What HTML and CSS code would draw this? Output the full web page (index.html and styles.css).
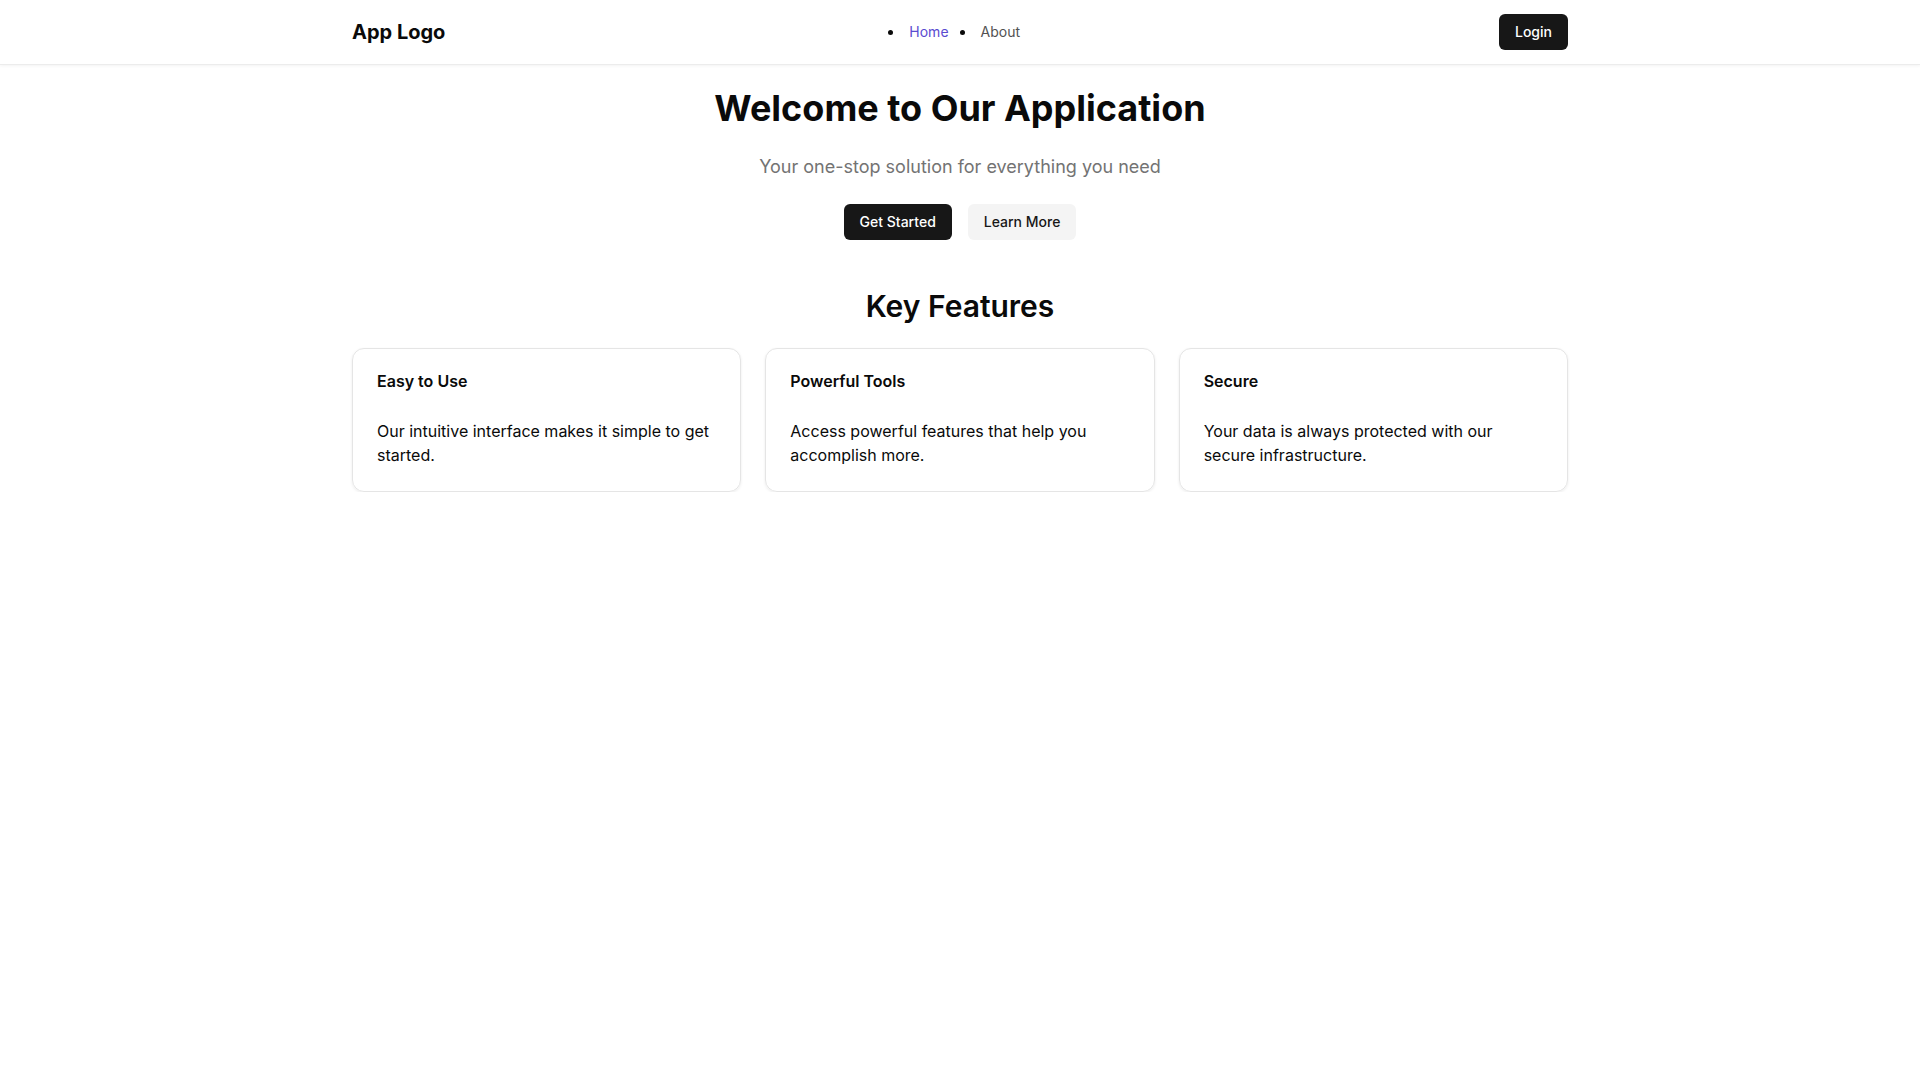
FILE: index.html
```html
<!DOCTYPE html>
<html lang="en">
<head>
<meta charset="UTF-8">
<meta name="viewport" content="width=device-width, initial-scale=1.0">
<title>Welcome to Our Application</title>
<link rel="stylesheet" href="styles.css">
</head>
<body>

<header class="site-header">
    <div class="container header-row">
        <div class="logo">App Logo</div>
        <nav>
            <ul class="nav-list">
                <li><a href="#" class="nav-link active">Home</a></li>
                <li><a href="#" class="nav-link">About</a></li>
            </ul>
        </nav>
        <button class="btn btn-dark">Login</button>
    </div>
</header>

<main class="container">
    <section class="hero">
        <h1>Welcome to Our Application</h1>
        <p class="subtitle">Your one-stop solution for everything you need</p>
        <div class="hero-actions">
            <button class="btn btn-dark">Get Started</button>
            <button class="btn btn-light">Learn More</button>
        </div>
    </section>

    <section class="features">
        <h2>Key Features</h2>
        <div class="card-grid">
            <div class="card">
                <h3>Easy to Use</h3>
                <p>Our intuitive interface makes it simple to get started.</p>
            </div>
            <div class="card">
                <h3>Powerful Tools</h3>
                <p>Access powerful features that help you accomplish more.</p>
            </div>
            <div class="card">
                <h3>Secure</h3>
                <p>Your data is always protected with our secure infrastructure.</p>
            </div>
        </div>
    </section>
</main>

</body>
</html>
```

FILE: styles.css
```css
* {
    box-sizing: border-box;
}
body {
    margin: 0;
    font-family: Inter, "Noto Sans", Arial, sans-serif;
    color: #0a0a0a;
    background-color: #fff;
}
.container {
    max-width: 1280px;
    margin: 0 auto;
    padding: 0 32px;
}

/* header */
.site-header {
    height: 65px;
    border-bottom: 1px solid #ececec;
    box-shadow: 0 1px 3px rgba(0, 0, 0, 0.05);
}
.header-row {
    height: 64px;
    display: flex;
    align-items: center;
    justify-content: space-between;
}
.logo {
    font-size: 20px;
    font-weight: 700;
}
.nav-list {
    display: flex;
    gap: 27px;
    margin: 0;
    padding: 0 20px 0 0;
    font-size: 14px;
    line-height: 20px;
}
.nav-list li {
    padding-left: 5px;
}
.nav-link {
    color: #525252;
    text-decoration: none;
}
.nav-link.active {
    color: #5b4bd0;
}

/* buttons */
.btn {
    font-family: inherit;
    font-size: 14px;
    font-weight: 500;
    line-height: 20px;
    height: 36px;
    padding: 8px 16px;
    border: none;
    border-radius: 6px;
    cursor: pointer;
}
.btn-dark {
    background-color: #171717;
    color: #fff;
}
.btn-light {
    background-color: #f4f4f4;
    color: #171717;
}

/* hero */
.hero {
    padding-top: 23px;
    text-align: center;
}
.hero h1 {
    margin: 0 0 25px;
    font-size: 36px;
    line-height: 40px;
    font-weight: 700;
}
.subtitle {
    margin: 0 0 23px;
    font-size: 18px;
    line-height: 28px;
    color: #737373;
}
.hero-actions {
    display: flex;
    justify-content: center;
    gap: 16px;
}

/* features */
.features {
    margin-top: 48px;
}
.features h2 {
    margin: 0 0 24px;
    text-align: center;
    font-size: 30px;
    line-height: 36px;
    font-weight: 600;
}
.card-grid {
    display: grid;
    grid-template-columns: repeat(3, 1fr);
    gap: 24px;
}
.card {
    padding: 24px;
    border: 1px solid #e5e5e5;
    border-radius: 12px;
    box-shadow: 0 1px 3px rgba(0, 0, 0, 0.08);
}
.card h3 {
    margin: 0 0 30px;
    font-size: 16px;
    line-height: 16px;
    font-weight: 600;
}
.card p {
    margin: 0;
    font-size: 16px;
    line-height: 24px;
}
```
